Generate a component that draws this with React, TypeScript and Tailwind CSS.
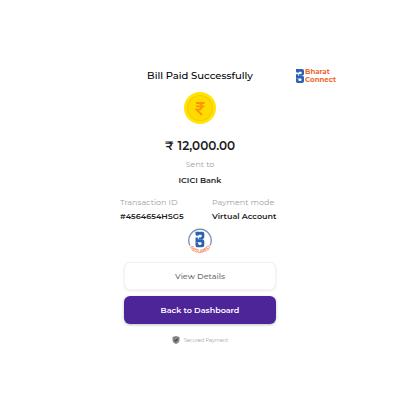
import type { ReactNode } from 'react';

const DETAILS = [
  { label: 'Transaction ID', value: '#4564654HSG5' },
  { label: 'Payment mode', value: 'Virtual Account' },
];

function BharatMark() {
  return (
    <g fill="#2b62b4">
      <path d="M0 0h6C7.400 0 8 .8 8 2v2.500C8 6 7.200 6.700 5.800 6.700H3V5.100h1.500c.8 0 1.200-.5 1.200-1.200s-.4-1.200-1.200-1.200H3.400c-.4.700-1 1-1.700 1C.6 3.700 0 3 0 2z" />
      <path d="M0 5.200h2.200v1.500H6c1.300 0 2 .8 2 2.200V12c0 1.300-.8 2-2.200 2H2c-1.300 0-2-.8-2-2.100V9.700h2.400v1.500c.2.500.6.700 1.200.700h.7c.8 0 1.300-.5 1.300-1.200s-.5-1.200-1.300-1.200H0z" />
    </g>
  );
}

function BharatConnectLogo() {
  return (
    <div className="flex items-center gap-px">
      <svg viewBox="0 0 8 14" className="h-3.5 w-2 shrink-0" aria-hidden="true">
        <BharatMark />
      </svg>
      <div className="text-[7px] leading-2 font-bold text-[#f0682d]">
        <span className="block">Bharat</span>
        <span className="block">Connect</span>
      </div>
    </div>
  );
}

function RupeeCoin() {
  return (
    <svg viewBox="0 0 32 32" className="size-8" aria-hidden="true">
      <circle cx="16" cy="16" r="16" fill="#ffe500" />
      <circle cx="16" cy="16" r="12.500" fill="#ffdc00" stroke="#fcc800" strokeWidth="1.200" />
      <path
        d="M12 11h8.500M12 14.300h8.500M12 11h2.500c4.300 0 4.300 6.600 0 6.600H12.500l5.500 5.400"
        fill="none"
        stroke="#ff9100"
        strokeWidth="1.800"
      />
    </svg>
  );
}

function AssuredBadge() {
  return (
    <svg viewBox="0 0 26 26" className="size-6.5 overflow-visible" role="img" aria-label="Bharat Connect Assured">
      <path d="M3 17.500A11.200 11.200 0 1 1 23 17.500" fill="none" stroke="#7a8fb5" strokeWidth="1.300" />
      <g transform="translate(8.500 3.800) scale(1.100)">
        <BharatMark />
      </g>
      <path id="assured-arc" d="M1 13A12 12 0 0 0 25 13" fill="none" />
      <text fill="#f07b4c" fontSize="5" fontWeight="600" textAnchor="middle">
        <textPath href="#assured-arc" startOffset="50%">ASSURED</textPath>
      </text>
    </svg>
  );
}

function ShieldIcon() {
  return (
    <svg viewBox="0 0 8 8" className="size-2" aria-hidden="true">
      <path d="M4 0l3.500 1v2.800C7.500 5.900 6.200 7.300 4 8 1.800 7.300.5 5.900.5 3.800V1z" fill="#858585" />
      <path d="M2.500 4.100l1.100 1 1.900-2.300" fill="none" stroke="#222" strokeWidth="1" />
    </svg>
  );
}

function Button({ children, primary = false }: { children: ReactNode; primary?: boolean }) {
  return (
    <button
      type="button"
      className={`h-7 w-full rounded-md text-[8px] leading-3 cursor-pointer ${
        primary
          ? 'bg-[#4e2599] font-semibold text-white shadow-[0_1px_3px_rgba(0,0,0,0.25)]'
          : 'border border-[#f2f2f2] bg-white font-medium text-[#6f6f6f] shadow-[0_1px_3px_rgba(0,0,0,0.08)]'
      }`}
    >
      {children}
    </button>
  );
}

export default function App() {
  return (
    <main className="flex min-h-screen flex-col items-center bg-white pt-17 font-['Montserrat','Inter',sans-serif] text-[#1c1c1c]">
      <header className="grid w-full grid-cols-[1fr_auto_1fr] items-center px-16">
        <h1 className="col-start-2 text-[10px] leading-4 font-medium text-black">Bill Paid Successfully</h1>
        <div className="justify-self-end">
          <BharatConnectLogo />
        </div>
      </header>

      <div className="mt-2">
        <RupeeCoin />
      </div>

      <p className="mt-3.5 flex gap-1 text-[12px] leading-4 font-semibold">
        <span>₹</span>
        <span>12,000.00</span>
      </p>
      <p className="mt-1 text-[8px] leading-3 text-[#a0a0a0]">Sent to</p>
      <p className="mt-1 text-[8px] leading-3 font-semibold">ICICI Bank</p>

      <dl className="mt-2.5 grid w-40 grid-cols-2 gap-6 whitespace-nowrap">
        {DETAILS.map((item) => (
          <div key={item.label}>
            <dt className="text-[8px] leading-3 text-[#a0a0a0]">{item.label}</dt>
            <dd className="mt-0.5 text-[8px] leading-3 font-semibold">{item.value}</dd>
          </div>
        ))}
      </dl>

      <div className="mt-1.5">
        <AssuredBadge />
      </div>

      <div className="mt-2 flex w-38 flex-col gap-1.5">
        <Button>View Details</Button>
        <Button primary>Back to Dashboard</Button>
      </div>

      <p className="mt-3 flex items-center gap-1 text-[5px] leading-2 text-[#a0a0a0]">
        <ShieldIcon />
        Secured Payment
      </p>
    </main>
  );
}
